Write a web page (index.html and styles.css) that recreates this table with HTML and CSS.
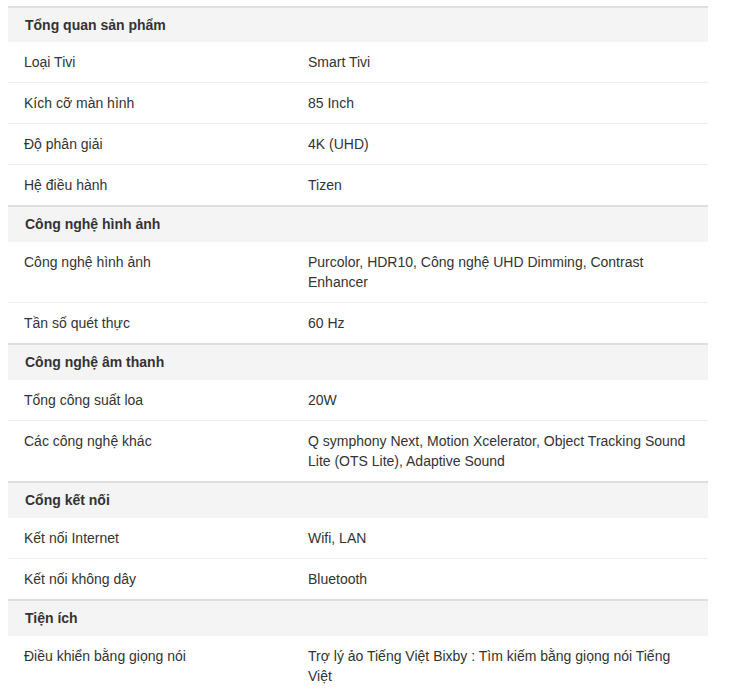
FILE: index.html
```html
<!DOCTYPE html>
<html lang="vi">
<head>
<meta charset="utf-8">
<title>Thông số kỹ thuật</title>
<link rel="stylesheet" href="styles.css">
</head>
<body>
<table class="spec">
  <colgroup><col class="c1"><col class="c2"></colgroup>
  <tbody>
    <tr class="group first"><td colspan="2">Tổng quan sản phẩm</td></tr>
    <tr><td>Loại Tivi</td><td>Smart Tivi</td></tr>
    <tr><td>Kích cỡ màn hình</td><td>85 Inch</td></tr>
    <tr><td>Độ phân giải</td><td>4K (UHD)</td></tr>
    <tr class="before-group"><td>Hệ điều hành</td><td>Tizen</td></tr>
    <tr class="group"><td colspan="2">Công nghệ hình ảnh</td></tr>
    <tr><td>Công nghệ hình ảnh</td><td>Purcolor, HDR10, Công nghệ UHD Dimming, Contrast Enhancer</td></tr>
    <tr class="before-group"><td>Tần số quét thực</td><td>60 Hz</td></tr>
    <tr class="group"><td colspan="2">Công nghệ âm thanh</td></tr>
    <tr><td>Tổng công suất loa</td><td>20W</td></tr>
    <tr class="before-group"><td>Các công nghệ khác</td><td>Q symphony Next, Motion Xcelerator, Object Tracking Sound Lite (OTS Lite), Adaptive Sound</td></tr>
    <tr class="group"><td colspan="2">Cổng kết nối</td></tr>
    <tr><td>Kết nối Internet</td><td>Wifi, LAN</td></tr>
    <tr class="before-group"><td>Kết nối không dây</td><td>Bluetooth</td></tr>
    <tr class="group"><td colspan="2">Tiện ích</td></tr>
    <tr><td>Điều khiển bằng giọng nói</td><td>Trợ lý ảo Tiếng Việt Bixby : Tìm kiếm bằng giọng nói Tiếng Việt</td></tr>
  </tbody>
</table>
</body>
</html>
```
FILE: styles.css
```css
body {
  margin: 6px 8px 8px;
  background: #fff;
  font-family: "Liberation Sans", Arial, sans-serif;
  font-size: 14px;
  color: #333;
}
.spec {
  width: 700px;
  border-collapse: separate;
  border-spacing: 0;
  table-layout: fixed;
}
.spec .c1 { width: 284px; }
.spec td {
  padding: 10px 16px;
  line-height: 20px;
  vertical-align: top;
  border-bottom: 1px solid #eeeeee;
}
.spec .before-group td {
  border-bottom: 0;
}
.spec .group td {
  background: #f4f4f4;
  border-top: 2px solid #dedede;
  border-bottom: 0;
  font-weight: bold;
  padding: 7px 17px 8px;
}
.spec .group.first td {
  padding-bottom: 7px;
}
```
